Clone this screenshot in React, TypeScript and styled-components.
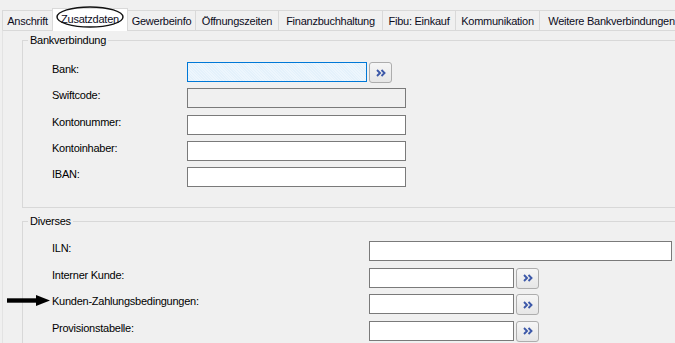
import React from "react";
import styled, { createGlobalStyle } from "styled-components";

const GlobalStyle = createGlobalStyle`
	body {
		margin: 0;
		background: #f0f0f0;
		font-family: "Liberation Sans", Arial, sans-serif;
	}
`;

const Window = styled.div`
	width: 675px;
	height: 343px;
	overflow: hidden;
	background: #f0f0f0;
	font-size: 11px;
	letter-spacing: -0.25px;
	color: #000;
`;

const TabStrip = styled.div`
	position: relative;
	z-index: 1;
	display: flex;
	align-items: flex-end;
	height: 31px;
	padding-left: 2px;
`;

const Tab = styled.div<{ $w: number; $active?: boolean }>`
	position: relative;
	flex: none;
	box-sizing: border-box;
	width: ${(p) => p.$w}px;
	height: ${(p) => (p.$active ? 23 : 20)}px;
	margin-left: -1px;
	margin-bottom: ${(p) => (p.$active ? 0 : 1)}px;
	border: 1px solid #d9d9d9;
	border-bottom: none;
	background: ${(p) => (p.$active ? "#ffffff" : "#f0f0f0")};
	z-index: ${(p) => (p.$active ? 2 : 1)};
	display: flex;
	align-items: center;
	justify-content: center;
	padding-bottom: ${(p) => (p.$active ? 2 : 0)}px;
	white-space: nowrap;
	color: #0c0c1c;

	&:first-child {
		margin-left: 0;
	}
`;

const Ring = styled.svg`
	position: absolute;
	left: 3px;
	top: -3px;
	width: 68px;
	height: 22px;
	overflow: visible;
`;

const Panel = styled.div`
	margin-top: -1px;
	margin-left: 2px;
	height: 320px;
	border-top: 1px solid #d9d9d9;
	border-left: 1px solid #e3e3e3;
	padding-top: 3px;
`;

const Group = styled.fieldset<{ $gap?: number }>`
	margin: ${(p) => p.$gap ?? 0}px 0 0 19px;
	padding: 0;
	width: 700px;
	border: 1px solid #d8d8d8;
	min-width: 0;
`;

const Legend = styled.legend`
	margin-left: 5px;
	padding: 0 2px;
	line-height: 13px;
	font-size: 11px;
`;

const GroupBody = styled.div<{ $top: number; $bottom: number; $gap: number }>`
	display: flex;
	flex-direction: column;
	gap: ${(p) => p.$gap}px;
	padding: ${(p) => p.$top}px 0 ${(p) => p.$bottom}px 29px;
`;

const Row = styled.div`
	display: flex;
	align-items: flex-start;
	height: 20px;
`;

const Label = styled.div<{ $w: number }>`
	position: relative;
	flex: none;
	width: ${(p) => p.$w}px;
	line-height: 15px;
	white-space: nowrap;
`;

const Field = styled.input<{ $w: number; $state?: "focus" | "disabled" }>`
	flex: none;
	box-sizing: border-box;
	width: ${(p) => p.$w}px;
	height: 20px;
	margin: 0;
	padding: 0 3px;
	font: inherit;
	outline: none;
	border: 1px solid ${(p) => (p.$state === "focus" ? "#0078d7" : "#7a7a7a")};
	background: ${(p) =>
		p.$state === "focus"
			? "repeating-linear-gradient(45deg, #e4f1fb 0 1px, #edf6fd 1px 2px)"
			: p.$state === "disabled"
			? "#f0f0f0"
			: "#ffffff"};
`;

const PickButton = styled.button`
	flex: none;
	box-sizing: border-box;
	width: 23px;
	height: 21px;
	margin: 0 0 0 2px;
	padding: 0;
	border: 1px solid #adadad;
	border-radius: 3px;
	background: linear-gradient(#f6f6f6, #e6e6e6);
	display: flex;
	align-items: center;
	justify-content: center;
`;

const Arrow = styled.svg`
	position: absolute;
	left: -45px;
	top: 1px;
	width: 43px;
	height: 11px;
`;

const Chevrons = () => (
	<svg width="10" height="8" viewBox="0 0 10 8">
		<path
			d="M1 1 L4 4 L1 7 M5.5 1 L8.5 4 L5.5 7"
			fill="none"
			stroke="#3c58a8"
			strokeWidth="1.9"
		/>
	</svg>
);

const tabs = [
	{ label: "Anschrift", w: 51 },
	{ label: "Zusatzdaten", w: 76, active: true },
	{ label: "Gewerbeinfo", w: 69 },
	{ label: "Öffnungszeiten", w: 84 },
	{ label: "Finanzbuchhaltung", w: 105 },
	{ label: "Fibu: Einkauf", w: 74 },
	{ label: "Kommunikation", w: 85 },
	{ label: "Weitere Bankverbindungen", w: 145 },
];

const App: React.FC = () => {
	return (
		<Window>
			<GlobalStyle />
			<TabStrip>
				{tabs.map((t) => (
					<Tab key={t.label} $w={t.w} $active={t.active}>
						{t.label}
						{t.active && (
							<Ring viewBox="0 0 68 22">
								<ellipse cx="34" cy="11" rx="33" ry="10" fill="none" stroke="#111" strokeWidth="1.4" />
							</Ring>
						)}
					</Tab>
				))}
			</TabStrip>
			<Panel>
				<Group>
					<Legend>Bankverbindung</Legend>
					<GroupBody $top={15} $bottom={20} $gap={6.25}>
						<Row>
							<Label $w={135}>Bank:</Label>
							<Field $w={180} $state="focus" readOnly />
							<PickButton>
								<Chevrons />
							</PickButton>
						</Row>
						<Row>
							<Label $w={135}>Swiftcode:</Label>
							<Field $w={219} $state="disabled" readOnly />
						</Row>
						<Row>
							<Label $w={135}>Kontonummer:</Label>
							<Field $w={219} readOnly />
						</Row>
						<Row>
							<Label $w={135}>Kontoinhaber:</Label>
							<Field $w={219} readOnly />
						</Row>
						<Row>
							<Label $w={135}>IBAN:</Label>
							<Field $w={219} readOnly />
						</Row>
					</GroupBody>
				</Group>
				<Group $gap={7}>
					<Legend>Diverses</Legend>
					<GroupBody $top={13} $bottom={20} $gap={6.67}>
						<Row>
							<Label $w={317}>ILN:</Label>
							<Field $w={303} readOnly />
						</Row>
						<Row>
							<Label $w={317}>Interner Kunde:</Label>
							<Field $w={145} readOnly />
							<PickButton>
								<Chevrons />
							</PickButton>
						</Row>
						<Row>
							<Label $w={317}>
								<Arrow viewBox="0 0 43 11">
									<rect x="0" y="3.3" width="31" height="4.4" fill="#000" />
									<polygon points="29,0 43,5.5 29,11" fill="#000" />
								</Arrow>
								Kunden-Zahlungsbedingungen:
							</Label>
							<Field $w={145} readOnly />
							<PickButton>
								<Chevrons />
							</PickButton>
						</Row>
						<Row>
							<Label $w={317}>Provisionstabelle:</Label>
							<Field $w={145} readOnly />
							<PickButton>
								<Chevrons />
							</PickButton>
						</Row>
					</GroupBody>
				</Group>
			</Panel>
		</Window>
	);
};

export default App;
